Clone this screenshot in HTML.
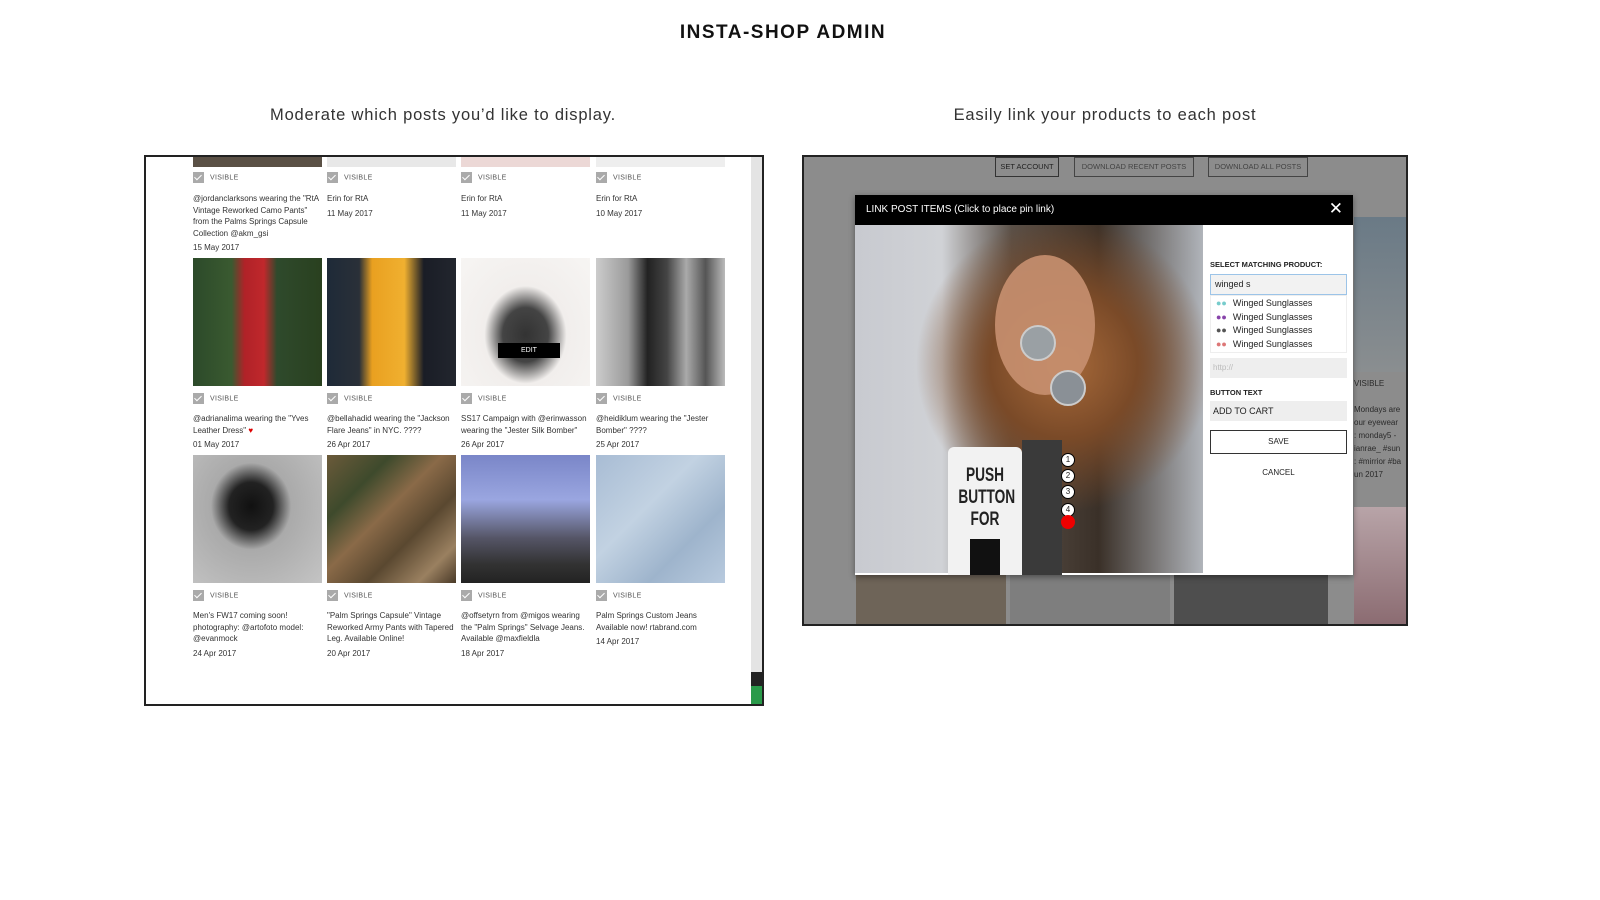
<!DOCTYPE html>
<html><head><meta charset="utf-8"><style>
*{margin:0;padding:0;box-sizing:border-box}
body{width:1600px;height:900px;background:#fff;position:relative;overflow:hidden;font-family:"Liberation Sans",sans-serif;color:#222}
.a{position:absolute}
h1{position:absolute;left:0;width:1566px;top:22px;text-align:center;font-size:19px;letter-spacing:1.5px;font-weight:bold;color:#111}
.sub{position:absolute;top:106px;font-size:16.5px;letter-spacing:.8px;color:#333;text-align:center}
.lp{position:absolute;left:144px;top:155px;width:620px;height:551px;border:2px solid #222;background:#fff;overflow:hidden}
.img{position:absolute;width:129px;height:128px}
.vis{position:absolute;font-size:7px;color:#555;letter-spacing:.3px}
.vis i{display:inline-block;width:11px;height:11px;background:#aaa;vertical-align:middle;margin-right:6px;position:relative}
.vis i:after{content:"";position:absolute;left:3px;top:1px;width:3px;height:6px;border:solid #fff;border-width:0 1.5px 1.5px 0;transform:rotate(45deg)}
.cap{position:absolute;font-size:8px;line-height:11.5px;color:#333;width:132px}
.cap b{font-weight:normal;display:block;margin-top:3px}
.rp{position:absolute;left:802px;top:155px;width:606px;height:471px;border:2px solid #222;background:#8c8c8c;overflow:hidden}
.btn{position:absolute;top:0;height:20px;border:1px solid #444;font-size:7.5px;line-height:18px;text-align:center;color:#444}
</style></head><body>
<h1>INSTA-SHOP ADMIN</h1>
<div class="sub" style="left:243px;width:400px">Moderate which posts you’d like to display.</div>
<div class="sub" style="left:905px;width:400px">Easily link your products to each post</div>

<div class="lp">
 <div class="a" style="left:605px;top:0;width:13px;height:549px;background:#e4e4e4"></div>
 <div class="a" style="left:605px;top:515px;width:13px;height:14px;background:#222"></div>
 <div class="a" style="left:605px;top:529px;width:13px;height:20px;background:#2a9a4a"></div>
 <div class="img" style="left:47px;top:0;height:10px;background:#5a5045"></div>
 <div class="img" style="left:181px;top:0;height:10px;background:#e8e8e8"></div>
 <div class="img" style="left:315px;top:0;height:10px;background:#ecd8d6"></div>
 <div class="img" style="left:450px;top:0;height:10px;background:#eee"></div>
 <div class="vis" style="left:47px;top:15px"><i></i>VISIBLE</div>
 <div class="vis" style="left:181px;top:15px"><i></i>VISIBLE</div>
 <div class="vis" style="left:315px;top:15px"><i></i>VISIBLE</div>
 <div class="vis" style="left:450px;top:15px"><i></i>VISIBLE</div>
 <div class="cap" style="left:47px;top:36px">@jordanclarksons wearing the "RtA Vintage Reworked Camo Pants" from the Palms Springs Capsule Collection @akm_gsi<b>15 May 2017</b></div>
 <div class="cap" style="left:181px;top:36px">Erin for RtA<b>11 May 2017</b></div>
 <div class="cap" style="left:315px;top:36px">Erin for RtA<b>11 May 2017</b></div>
 <div class="cap" style="left:450px;top:36px">Erin for RtA<b>10 May 2017</b></div>
 <div class="img" style="left:47px;top:101px;background:linear-gradient(90deg,#2c4a2a 0,#3a5a30 30%,#b02228 40%,#c0282c 55%,#2f4a2c 65%,#29401f 100%)"></div>
 <div class="img" style="left:181px;top:101px;background:linear-gradient(90deg,#1e2a38 0,#2a3038 25%,#e9a020 35%,#f0b030 60%,#1a1d26 75%,#22262e 100%)"></div>
 <div class="img" style="left:315px;top:101px;background:radial-gradient(ellipse at 50% 60%,#333 0,#444 25%,#f1eeec 45%,#f7f5f3 100%)"></div>
 <div class="a" style="left:352px;top:186px;width:62px;height:15px;background:#000;color:#fff;font-size:7px;text-align:center;line-height:15px">EDIT</div>
 <div class="img" style="left:450px;top:101px;background:linear-gradient(90deg,#ccc 0,#9a9a9a 25%,#222 40%,#444 55%,#aaa 70%,#555 85%,#bbb 100%)"></div>
 <div class="vis" style="left:47px;top:236px"><i></i>VISIBLE</div>
 <div class="vis" style="left:181px;top:236px"><i></i>VISIBLE</div>
 <div class="vis" style="left:315px;top:236px"><i></i>VISIBLE</div>
 <div class="vis" style="left:450px;top:236px"><i></i>VISIBLE</div>
 <div class="cap" style="left:47px;top:256px">@adrianalima wearing the "Yves Leather Dress" <span style="color:#d00">♥</span><b>01 May 2017</b></div>
 <div class="cap" style="left:181px;top:256px">@bellahadid wearing the "Jackson Flare Jeans" in NYC. ????<b>26 Apr 2017</b></div>
 <div class="cap" style="left:315px;top:256px">SS17 Campaign with @erinwasson wearing the "Jester Silk Bomber"<b>26 Apr 2017</b></div>
 <div class="cap" style="left:450px;top:256px">@heidiklum wearing the "Jester Bomber" ????<b>25 Apr 2017</b></div>
 <div class="img" style="left:47px;top:298px;background:radial-gradient(ellipse at 45% 40%,#111 0,#222 22%,#aaa 40%,#c4c4c4 100%)"></div>
 <div class="img" style="left:181px;top:298px;background:linear-gradient(135deg,#6b5a3a 0,#3e4a2c 25%,#8a6a48 45%,#5a4830 65%,#9a8060 85%,#4a3a28 100%)"></div>
 <div class="img" style="left:315px;top:298px;background:linear-gradient(180deg,#7a86c8 0,#9aa6e0 35%,#556 65%,#333 85%,#222 100%)"></div>
 <div class="img" style="left:450px;top:298px;background:linear-gradient(135deg,#a8bcd4 0,#c2d2e2 40%,#9eb4cc 70%,#b8cade 100%)"></div>
 <div class="vis" style="left:47px;top:433px"><i></i>VISIBLE</div>
 <div class="vis" style="left:181px;top:433px"><i></i>VISIBLE</div>
 <div class="vis" style="left:315px;top:433px"><i></i>VISIBLE</div>
 <div class="vis" style="left:450px;top:433px"><i></i>VISIBLE</div>
 <div class="cap" style="left:47px;top:453px">Men's FW17 coming soon! photography: @artofoto model: @evanmock<b>24 Apr 2017</b></div>
 <div class="cap" style="left:181px;top:453px">"Palm Springs Capsule" Vintage Reworked Army Pants with Tapered Leg. Available Online!<b>20 Apr 2017</b></div>
 <div class="cap" style="left:315px;top:453px">@offsetyrn from @migos wearing the "Palm Springs" Selvage Jeans. Available @maxfieldla<b>18 Apr 2017</b></div>
 <div class="cap" style="left:450px;top:453px">Palm Springs Custom Jeans Available now! rtabrand.com<b>14 Apr 2017</b></div>
</div>

<div class="rp">
 <div class="btn" style="left:191px;width:64px;color:#222;border-color:#333">SET ACCOUNT</div>
 <div class="btn" style="left:270px;width:120px">DOWNLOAD RECENT POSTS</div>
 <div class="btn" style="left:404px;width:100px">DOWNLOAD ALL POSTS</div>
 <div class="a" style="left:550px;top:60px;width:56px;height:155px;background:linear-gradient(180deg,#6a7a86,#8a8e90)"></div>
 <div class="a" style="left:550px;top:220px;font-size:8px;color:#2a2a2a;line-height:13px">VISIBLE<br><br>Mondays are<br>our eyewear<br>: monday5 -<br>ianrae_ #sun<br>: #mirrior #ba<br>un 2017</div>
 <div class="a" style="left:550px;top:350px;width:56px;height:121px;background:linear-gradient(180deg,#b8a4a8,#8a6a70)"></div>
 <div class="a" style="left:52px;top:418px;width:150px;height:53px;background:#6e6458"></div>
 <div class="a" style="left:206px;top:418px;width:160px;height:53px;background:#7e7e7e"></div>
 <div class="a" style="left:370px;top:418px;width:154px;height:53px;background:#4e4e4e"></div>
 <div class="a" style="left:51px;top:38px;width:498px;height:380px;background:#fff;box-shadow:0 2px 6px rgba(0,0,0,.4)">
  <div class="a" style="left:0;top:0;width:498px;height:30px;background:#000;color:#fff;font-size:10px;line-height:30px;padding-left:11px">LINK POST ITEMS (Click to place pin link)</div>
  <div class="a" style="right:10px;top:4px;color:#fff;font-size:17px">✕</div>
  <div class="a" style="left:0;top:30px;width:348px;height:348px;background:radial-gradient(ellipse at 60% 40%,#a86a3a 0,#7a4a28 25%,transparent 50%),linear-gradient(90deg,#c8cad0 0,#d0d2d6 25%,#5a5048 45%,#3a3028 70%,#b0b4ba 100%)"></div>
  <div class="a" style="left:140px;top:60px;width:100px;height:140px;background:#c89070;border-radius:50%;opacity:.9"></div>
  <div class="a" style="left:165px;top:130px;width:36px;height:36px;border-radius:50%;background:#9aa0a4;border:2px solid #ccc"></div>
  <div class="a" style="left:195px;top:175px;width:36px;height:36px;border-radius:50%;background:#8a9096;border:2px solid #ccc"></div>
  <div class="a" style="left:93px;top:252px;width:74px;height:128px;background:#f2f2f2;border-radius:6px 6px 0 0;overflow:hidden"><div style="font-weight:bold;font-size:19px;line-height:22px;text-align:center;padding-top:18px;color:#222;transform:scaleX(.72)">PUSH<br>BUTTON<br>FOR</div><div style="margin:8px auto 0;width:30px;height:40px;background:#111"></div></div>
  <div class="a" style="left:167px;top:245px;width:40px;height:135px;background:#3a3a3a"></div>
  <div class="a" style="left:206px;top:258px;font-size:8px;line-height:16px">
   <div style="width:14px;height:14px;border-radius:50%;background:#fff;border:1px solid #000;text-align:center;line-height:12px;margin-bottom:2px">1</div>
   <div style="width:14px;height:14px;border-radius:50%;background:#fff;border:1px solid #000;text-align:center;line-height:12px;margin-bottom:2px">2</div>
   <div style="width:14px;height:14px;border-radius:50%;background:#fff;border:1px solid #000;text-align:center;line-height:12px;margin-bottom:4px">3</div>
   <div style="width:14px;height:14px;border-radius:50%;background:#fff;border:1px solid #000;text-align:center;line-height:12px">4</div>
   <div style="width:14px;height:14px;border-radius:50%;background:#e00;margin-top:-2px"></div>
  </div>
  <div class="a" style="left:355px;top:65px;font-size:7.5px;font-weight:bold;color:#222">SELECT MATCHING PRODUCT:</div>
  <div class="a" style="left:355px;top:79px;width:137px;height:21px;background:#f2f2f2;border:1px solid #9cc4e8;font-size:9px;line-height:19px;padding-left:4px">winged s</div>
  <div class="a" style="left:355px;top:100px;width:137px;height:58px;border:1px solid #eee;font-size:9px;line-height:13.6px;padding:1px 0 0 5px;color:#222">
   <div><span style="color:#7cc;margin-right:6px">●●</span>Winged Sunglasses</div>
   <div><span style="color:#84a;margin-right:6px">●●</span>Winged Sunglasses</div>
   <div><span style="color:#555;margin-right:6px">●●</span>Winged Sunglasses</div>
   <div><span style="color:#d77;margin-right:6px">●●</span>Winged Sunglasses</div>
  </div>
  <div class="a" style="left:355px;top:163px;width:137px;height:20px;background:#eee;font-size:8px;line-height:20px;padding-left:3px;color:#bbb">http://</div>
  <div class="a" style="left:355px;top:193px;font-size:7.5px;font-weight:bold">BUTTON TEXT</div>
  <div class="a" style="left:355px;top:206px;width:137px;height:20px;background:#eee;font-size:9px;line-height:20px;padding-left:3px">ADD TO CART</div>
  <div class="a" style="left:355px;top:235px;width:137px;height:24px;border:1.5px solid #333;font-size:8px;line-height:21px;text-align:center">SAVE</div>
  <div class="a" style="left:355px;top:273px;width:137px;font-size:8px;text-align:center">CANCEL</div>
 </div>
</div>
</body></html>
